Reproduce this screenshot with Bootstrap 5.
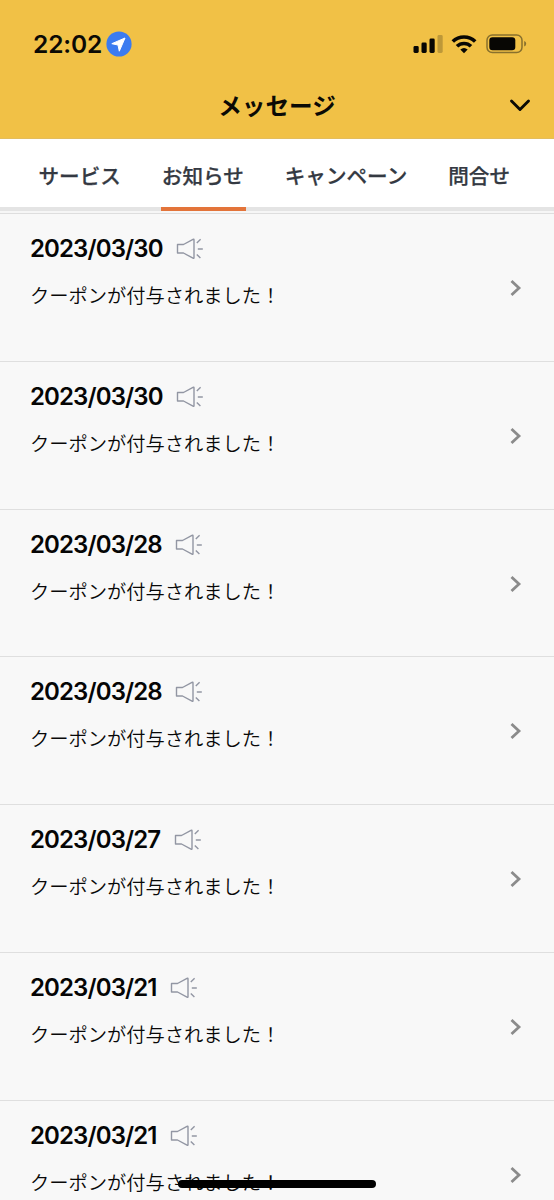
<!DOCTYPE html>
<html lang="ja">
<head>
<meta charset="utf-8">
<meta name="viewport" content="width=device-width, initial-scale=1">
<title>メッセージ</title>
<link href="https://cdn.jsdelivr.net/npm/bootstrap@5.3.0/dist/css/bootstrap.min.css" rel="stylesheet">
<style>
  body { font-family: Inter, "Noto Sans CJK JP", sans-serif; background: #f8f8f8; color: #080808; height: 1200px; }
  .app-head { background: #f1c146; height: 139px; color: #0b0a05; border-bottom: 1px solid #e3bd5d; }
  .status-bar { height: 72px; padding: 16px 27px 0 33px; }
  .clock { font-size: 24.5px; font-weight: 600; line-height: 1; letter-spacing: -.1px; }
  .title-bar { height: 68px; font-family: "Noto Sans CJK JP", sans-serif; }
  .title-bar h1 { font-size: 23.6px; font-weight: 700; line-height: 1; }
  .title-bar svg { right: 23px; top: 26px; }
  .tab-strip { height: 75px; background: #fff; padding: 0 39px 0 37.500px; border-bottom: 1px solid #dedede; font-family: "Noto Sans CJK JP", sans-serif; }
  .tab-strip::after { content: ""; position: absolute; left: 0; right: 0; bottom: 0; height: 6px; background: linear-gradient(#e4e4e4 4px, #f6f6f6 4px); }
  .tab-strip .nav-link { color: #343942; font-size: 20.6px; font-weight: 500; -webkit-text-stroke: .25px; line-height: 72px; height: 73px; padding: 0 1px; position: relative; z-index: 1; white-space: nowrap; }
  .tab-strip .nav-link.active::after { content: ""; position: absolute; left: 0; right: -1px; top: 68px; height: 4px; background: #e3743a; }
  .notice { height: 147.8px; padding: 0 31px 0 30px; border-bottom: 1px solid #dfdfdf; }
  .notice-date { font-size: 24px; font-weight: 600; line-height: 30px; letter-spacing: -.88px; color: #050505; }
  .notice-text { font-family: "Noto Sans CJK JP", sans-serif; font-size: 19.25px; font-weight: 350; line-height: 28px; margin-top: 17px; }
  .chev { margin-top: 65px; }
  .home-bar { left: 178px; top: 1180px; width: 198px; height: 8px; background: #000; }
</style>
</head>
<body class="overflow-hidden position-relative">
<header class="app-head">
  <div class="status-bar d-flex align-items-center">
    <span class="clock">22:02</span>
    <svg class="ms-1" width="26" height="26" viewBox="0 0 26 26"><circle cx="13" cy="13" r="12.6" fill="#3b7bf0"/><path d="M19 7 5.8 12.7 12 14 13.3 20.2Z" fill="#fff" stroke="#fff" stroke-linejoin="round"/></svg>
    <svg class="ms-auto" width="30" height="20" viewBox="0 0 30 20"><g fill="#080704"><rect x=".5" y="12" width="5.2" height="7" rx="1.4"/><rect x="8.5" y="8.5" width="5.2" height="10.5" rx="1.4"/><rect x="16.5" y="4.5" width="5.2" height="14.500" rx="1.4"/></g><rect x="24.500" y="1" width="5.2" height="18" rx="1.4" fill="#bd9838"/></svg>
    <svg width="26" height="20" viewBox="0 0 26 20" style="margin-left:8px"><g fill="none" stroke="#080704" stroke-width="3.600"><path d="M1.8 7.500a16 16 0 0 1 22.400 0"/><path d="M6 12.300a10 10 0 0 1 14 0"/></g><path d="M9.300 15.500q3.700-3.100 7.400 0L13 19.200Z" fill="#080704"/></svg>
    <svg width="41" height="20" viewBox="0 0 41 20" style="margin-left:9px"><rect x="1" y="1" width="35" height="17.500" rx="5.300" fill="none" stroke="#88702d" stroke-width="1.500"/><rect x="3.300" y="3.300" width="26" height="13" rx="3.200" fill="#080704"/><path d="M38.200 7v5.500q2-.8 2-2.750T38.200 7" fill="#88702d"/></svg>
  </div>
  <div class="title-bar d-flex align-items-center justify-content-center position-relative">
    <h1 class="m-0">メッセージ</h1>
    <svg class="position-absolute" width="22" height="16" viewBox="0 0 22 16" fill="none" stroke="#0b0a05" stroke-width="2.900" stroke-linecap="round" stroke-linejoin="round"><path d="m2.500 3 8.500 8.500L19.500 3"/></svg>
  </div>
</header>
<nav class="tab-strip nav flex-nowrap justify-content-between position-relative">
  <a class="nav-link" href="#">サービス</a>
  <a class="nav-link active" href="#">お知らせ</a>
  <a class="nav-link" href="#">キャンペーン</a>
  <a class="nav-link me-1" href="#">問合せ</a>
</nav>
<main id="notices"></main>
<div class="home-bar position-absolute rounded-pill"></div>
<script src="https://cdn.jsdelivr.net/npm/bootstrap@5.3.0/dist/js/bootstrap.bundle.min.js"></script>
<script>
  const dates = ['2023/03/30', '2023/03/30', '2023/03/28', '2023/03/28', '2023/03/27', '2023/03/21', '2023/03/21'];
  document.getElementById('notices').innerHTML = dates.map(d => `
    <article class="notice d-flex justify-content-between">
      <div style="padding-top:20px">
        <div class="d-flex align-items-center">
          <span class="notice-date">${d}</span>
          <svg width="28" height="24" viewBox="0 0 28 24" style="margin-left:13.500px" fill="none" stroke="#9296a3" stroke-width="1.400" stroke-linejoin="round"><path d="M1.500 7.500h6L17 2.300q1-.5 1 .5v17.900q0 1-1 .5L7.500 16h-6ZM20.800 6l3.800-3.700M21.800 12h5M20.800 17.500l3.600 3.600"/></svg>
        </div>
        <div class="notice-text">クーポンが付与されました！</div>
      </div>
      <svg class="chev" width="14" height="18" viewBox="0 0 14 18" fill="none" stroke="#8b8b8b" stroke-width="2.800"><path d="m2.500 2 7.500 7-7.500 7"/></svg>
    </article>`).join('');
</script>
</body>
</html>
